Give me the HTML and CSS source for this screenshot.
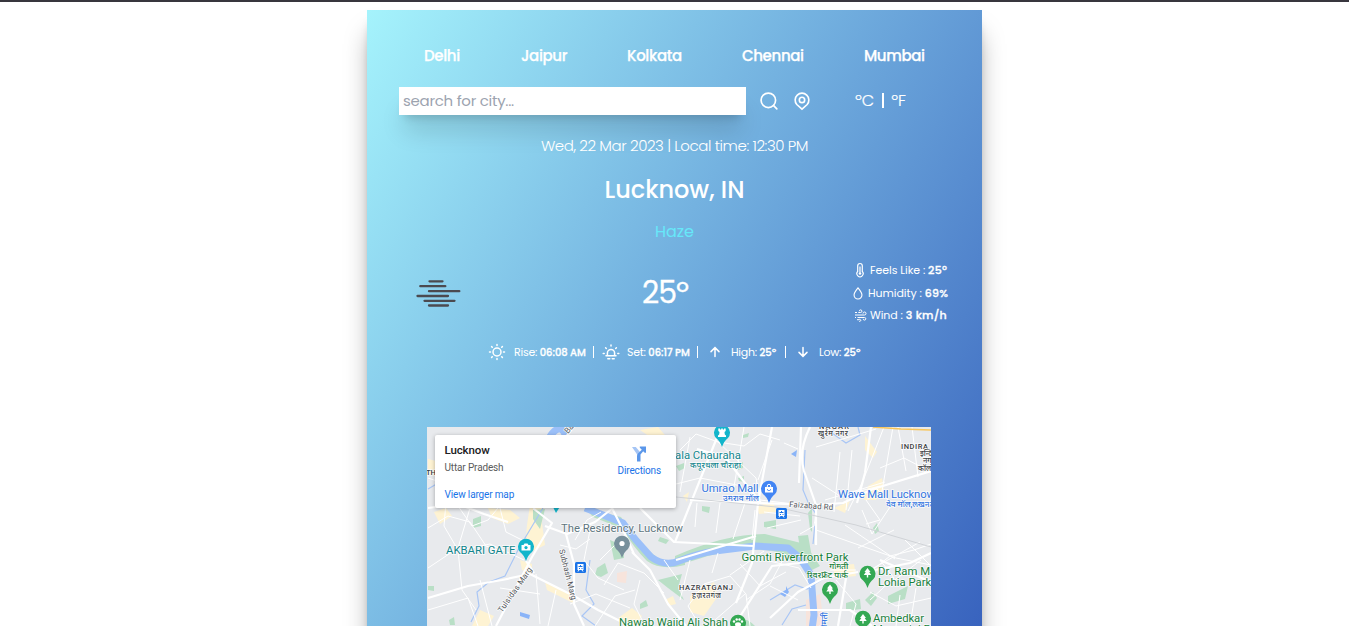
FILE: index.html
```html
<!DOCTYPE html>
<html lang="en">
<head>
<meta charset="utf-8">
<title>Weather</title>
<link rel="stylesheet" href="styles.css">
</head>
<body>
<div class="page">
<main class="card">
  <nav class="cities">
    <a class="c1">Delhi</a><a class="c2">Jaipur</a><a class="c3">Kolkata</a><a class="c4">Chennai</a><a class="c5">Mumbai</a>
  </nav>
  <div class="search">
    <div class="field"><span>search for city...</span></div>
    <svg class="icon find" viewBox="0 0 24 24"><circle cx="11.2" cy="11.2" r="8.7"/><path d="M17.6 17.6 21.4 21.4"/></svg>
    <svg class="icon pin" viewBox="0 0 24 24"><path d="M12 21.8 5.8 16.2A8.2 8.2 0 1 1 18.2 16.2Z"/><circle cx="12" cy="10.7" r="3.2"/></svg>
    <div class="units"><span>ºC</span><i></i><span>ºF</span></div>
  </div>
  <p class="date"><span>Wed, 22 Mar 2023 | Local time: 12:30 PM</span></p>
  <h1 class="place"><span>Lucknow, IN</span></h1>
  <p class="state"><span>Haze</span></p>
  <section class="now">
    <svg class="haze" viewBox="0 0 46 30"><path d="M13.5 2.3H26.500M4.300 7.200H29.300M13 12.200H43.300M1.500 17H32M8.500 21.800H38.500M13 26.500H32"/></svg>
    <div class="temp">25º</div>
    <ul class="details">
      <li class="feels"><svg viewBox="0 0 12 16"><path d="M3.700 9.500V3.800a2.300 2.300 0 0 1 4.600 0v5.700a3.100 3.100 0 1 1-4.600 0ZM6 4.500v6"/><circle class="solid" cx="6" cy="11.500" r="1.300"/></svg><span>Feels Like : <b>25º</b></span></li>
      <li class="humid"><svg viewBox="0 0 12 16"><path d="M6 2C3.500 5 1.800 7.300 1.800 9.700a4.200 4.200 0 0 0 8.400 0C10.200 7.300 8.500 5 6 2Z"/></svg><span>Humidity : <b>69%</b></span></li>
      <li class="wind"><svg viewBox="0 0 13 13"><path d="M1 3.500H3M4.300 3.500H6.600A1.300 1.300 0 1 0 5.300 2.200M1 6H10.500A1.500 1.500 0 1 0 9 4.500M1 8.500H2M3.500 8.500H10.500A1.300 1.300 0 1 1 9.200 9.800M3 10.700H5A1 1 0 1 1 5 12"/></svg><span>Wind : <b>3 km/h</b></span></li>
    </ul>
  </section>
  <section class="sun">
    <svg class="icon rise" viewBox="0 0 18 18"><circle cx="9" cy="9" r="4"/><path d="M9 1.500v1M9 15.500v1M1.500 9h1M15.500 9h1M3.600 3.600l.7.700M13.700 13.700l.7.700M3.600 14.400l.7-.7M13.700 4.300l.7-.7"/></svg>
    <span class="t-rise">Rise: <b>06:08 AM</b></span><i></i>
    <svg class="icon set" viewBox="0 0 18 18"><path d="M1.200 10.500h1M15.800 10.500h1M9 2v1M3.600 4.800l.7.700M14.400 4.800l-.7.700M4 12.800H14M5.400 12.500V10a3.600 3.600 0 0 1 7.200 0V12.500M5.800 15.800H7.800M10.200 15.800H12.200"/></svg>
    <span class="t-set">Set: <b>06:17 PM</b></span><i></i>
    <svg class="icon up" viewBox="0 0 18 18"><path d="M9 13.500V4.800M5 8.600 9 4.600l4 4"/></svg>
    <span class="t-high">High: <b>25º</b></span><i></i>
    <svg class="icon down" viewBox="0 0 18 18"><path d="M9 4.500v8.700M5 9.400 9 13.400l4-4"/></svg>
    <span class="t-low">Low: <b>25º</b></span>
  </section>
  <div class="map">
    <svg class="tiles" viewBox="427 427 504 199">
      <g class="builtup">
        <path d="M428 459l12 3 8 10-6 6-14-4ZM434 512l12-4 6 8-12 8ZM488 508l22 2 10 8-12 6-16-6ZM530 505l14 0-2 18 3 22-12 6-8-6 2-20ZM520 560l12 4 0 10-10-4ZM545 582l22 10 8 12-28-14ZM618 618l14-10 10 8-6 10ZM665 600l8-4 3 8-8 2ZM690 596l24-14 4 14-14 20-14-4ZM757 506l16-4 4 10-18 2ZM832 566l22-2 2 12-20 2ZM865 436l12 16-4 6-8-8ZM868 486l14-8 2 12-8 10-12 0ZM834 508l16-7-5 12ZM683 496l6-4-2 10ZM480 610l14 6-6 10-16 0ZM640 430l18-3 12 14-8 4Z"/>
      </g>
      <path class="hospital" d="M617 573l10-2-1 12-9-1ZM806 600l14-6 4 32-18 0Z"/>
      <g class="park">
        <path d="M585 508l36 9q14 24 38 42 12 6 26 1v5q-24 6-38-4-14-14-24-32l-30-12Z"/>
        <path d="M675 556q50-22 90-22l40 10 15 22-10 5-28-18q-40-10-90 8l-17 4Z"/>
        <path d="M473 519l8-3v10l-8 2ZM533 510l12-1-5 20-7-10ZM610 540l14 6 0 12-10 2ZM597 568l8-5 3 10-7 4-6-2ZM658 580l24-6-4 14 6 12-16-12ZM640 604l6-4 2 6-8 3ZM428 586l6 0v5l-6-1ZM449 620l5-3 1 8-5 0ZM660 537l9 3-3 4-8-3ZM764 522l12-2v9l-12-2ZM803 566l10-3-5-28-10 1ZM702 506l8 1-1 6-7-2ZM738 465l5-3v6l-5 2ZM738 478l6-2v6l-5-1ZM676 466l8-3 1 5-6 3ZM743 435l6-2-1 4-5 1ZM846 603l14-4 1 10-15 2ZM865 600l8-8 4 6-6 8ZM888 596l20-10-3 13-17 5ZM873 528l4-5 2 8-4 3ZM810 529l-2-16 4-5v24ZM735 620q10-4 20 6h-22Z"/>
      </g>
      <path class="canal" d="M428 489l12-7M543 508l-24 40-14 28-16 6-12 10 2 14-8 16M590 560l-4 30 8 14-12 12 14 10M805 450l-2 40 5 12 8 12-3 30M770 600l25-15 12 4 16-10M782 625l10-16 14-4M835 427l-3 6 14 10 14-8-2-8"/>
      <path class="river" d="M549 438q10-16 16-4l-2 14M585 508q26 10 38 15l12 16 16 18q14 10 28 4 20-8 36-10l40-5 33 2 12 10 11 17 3 40-2 14"/>
      <path class="pond" d="M780 594l6-4v-4l3 6-4 5ZM520 612l10 3-1 4-9-3ZM791 454l6-4-1 7Z"/>
      <g class="minor">
        <path d="M428 478l12 4 6 20-2 24 14 24 4 40 14 20M428 528l20-12 22 6 16 24 12 4M458 506l14 20 16-6 10-12M470 508l-12 40-30 20M500 508l6 24 20 10M428 610l40-12 10 28M460 550l30-6 34 16M480 580l12 46M536 574l4 50M500 588l40 6M556 590l-8 36M575 540l12-20 14-8M590 530l-6 30 14 18 26 12M600 560l20-20M604 585l14-22 26 10 20 20M560 545l16 4 14-10M570 604l26-10 34 14M595 626l20-30 20-6M640 580l-6 24 10 20M664 560l14 20M690 560l-10 40M700 626l-12-20 16-22 26-8 16 18 4 32M730 575l34-24M740 564l20 22 26-14M746 600l24-16 16-30M770 586l28 14M718 553l-6 20"/>
        <path d="M680 450l16-16 22 8 26 4 16-12 20 6M690 437l-10 55M716 440l40 38 4 22M744 427l-10 60M772 440l-14 40M784 443l14 6M676 484l24-6 42 8M697 503l-2 24M720 503l-4 30M745 503l-12 36M760 500l42 5M764 512l36 4M767 528l34-8M816 447l40-12 20-6M812 478l28 18 40-10M840 452l-6 60M852 450l-6 60M825 500l60-18M862 510l10 24 20-30-16-16M884 427l-14 36-8 20-14 28M893 427l-12 70M898 427l8 44M912 427l6 50M880 468l24-10 27 14M866 500l14 20-14 4M816 512l-2 14-14 8"/>
        <path d="M816 530l40 14 40 14 35 7M845 525l50 34M860 580l30-24 24-6 17-6M880 560l14 18-24 22M895 580l26-20M905 540l26 26M900 595l-4 31M916 588l-6 38M836 580l20 24-6 22M830 570l26 0M870 592l26 14 35-8M858 548l36-18M870 570l50-28M765 560l34 8 12 20M715 620l30-26M755 510l-3 30"/>
      </g>
      <g class="road">
        <path d="M572 429l-30 40-8 40 18 14-20 34-36 69M428 598l40-12 34-6 28-6 44 22 24 14 32 16M534 573l-8-12M545 526l22 8 28-12 18-14M566 534l8 30 0 40 10 22M632 552l18 18 18 34 18 22M612 508l12 24 10 22M428 508l30-4 26 10 24 8M640 508l34 34 80 4"/>
        <path d="M697 449l28 8 20 26 16 20M690 500l70 3 55 2 28-2 30-14 58-18M720 430l-36 90-9 22M772 427l-14 76-6 60-16 40M810 427q-12 24-6 44l12 34 0 40M871 427l-6 46-8 30M801 427l-2 56M676 560l80-24M860 573l50-10 21-10M734 626l38-60 36-4M770 618l28-26 26-14 34-6M798 610h52l22 16M846 578l-8 48M880 560l51 22"/>
      </g>
      <path class="rail" d="M676 497l100 10 80 18 75 22"/>
      <path class="highway" d="M873 427l28 2 30 1"/>

      <g class="poi">
        <path class="teal" d="M556 513l-4-8h9ZM722 447q-2-6-6-9a8 8 0 1 1 12 0q-4 3-6 9ZM526 561q-2-6-6-9a8 8 0 1 1 12 0q-4 3-6 9Z"/>
        <path class="blue" d="M769 503q-2-6-6-9a8 8 0 1 1 12 0q-4 3-6 9Z"/>
        <path class="gray" d="M622 558q-2-6-6-9a8 8 0 1 1 12 0q-4 3-6 9Z"/>
        <path class="green" d="M867.500 588q-2-6-6-9a8 8 0 1 1 12 0q-4 3-6 9ZM830 604q-2-6-6-9a8 8 0 1 1 12 0q-4 3-6 9ZM863 633q-2-6-6-9a8 8 0 1 1 12 0q-4 3-6 9ZM738 637q-2-6-6-9a8 8 0 1 1 12 0q-4 3-6 9Z"/>
        <g class="glyph">
          <path d="M718 437v-1.500l1.200-1 .3-2.500-1.200-1v-2.500h1.700v1h1.200v-1h1.600v1h1.200v-1h1.700v2.500l-1.200 1 .3 2.500 1.200 1v1.500Z"/>
          <path d="M521.500 545h2l1-1.500h3l1 1.500h2v5.500h-9Z"/><circle class="teal" cx="526" cy="547.600" r="1.600"/>
          <path d="M765 487h8v5.500h-8Z"/><circle cx="622" cy="543.500" r="2.600"/>
          <path d="M867.500 568l3 4h-1.300l2 3h-3v2.500h-1.400V575h-3l2-3h-1.300ZM830 584.500l3 4h-1.300l2 3h-3v2.500h-1.400v-2.500h-3l2-3h-1.300ZM863 614l3 4h-1.300l2 3h-3v2.500h-1.400V621h-3l2-3h-1.300Z"/>
          <ellipse cx="738" cy="624.500" rx="3" ry="2.300"/><circle cx="734" cy="621.500" r="1.200"/><circle cx="736.700" cy="619.500" r="1.200"/><circle cx="739.500" cy="619.500" r="1.200"/><circle cx="742" cy="621.500" r="1.200"/>
        </g>
        <path class="bag" d="M767.300 487v-1a1.700 1.700 0 0 1 3.400 0v1"/>
        <path class="smile" d="M767.300 489a1.700 1.700 0 0 0 3.400 0"/>
        <g class="station"><rect x="575" y="562" width="11" height="11" rx="1.500"/><rect x="776" y="508" width="11" height="11" rx="1.500"/></g>
        <path class="glyph" d="M577.500 564h6v6h-6ZM778.500 510h6v6h-6Z"/>
        <path class="train" d="M578.500 566.500h4M580.500 565v2M779.500 512.500h4M781.500 511v2M579 568.500h1M581.500 568.500h1M780 514.500h1M782.500 514.500h1"/>
        <path class="legs" d="M578 571.500l1-1.500M583 571.500l-1-1.500M779 517.500l1-1.500M784 517.500l-1-1.500"/>
      </g>
      <g class="label">
        <text class="l-teal" x="675" y="459" textLength="66">ala Chauraha</text>
        <text class="l-teal sm" x="690" y="467.500" textLength="51">कपूरथला चौराहा</text>
        <text class="l-teal" x="446" y="554" textLength="69.500" lengthAdjust="spacingAndGlyphs">AKBARI GATE</text>
        <text class="l-blue" x="701.500" y="492" textLength="57">Umrao Mall</text>
        <text class="l-blue sm" x="723" y="500.500" textLength="36">उमराव मॉल</text>
        <text class="l-blue" x="838" y="497.500" textLength="97">Wave Mall Lucknow</text>
        <text class="l-blue sm" x="886" y="506.500" textLength="50">वेव मॉल,लखनऊ</text>
        <text class="l-gray" x="561" y="532" textLength="122">The Residency, Lucknow</text>
        <text class="l-green" x="741.500" y="561" textLength="107">Gomti Riverfront Park</text>
        <text class="l-green sm" x="829" y="569" textLength="19">गोमती</text>
        <text class="l-green sm" x="807" y="578" textLength="41">रिवरफ्रंट पार्क</text>
        <text class="l-green" x="878" y="575">Dr. Ram Manohar</text>
        <text class="l-green" x="878" y="586">Lohia Park</text>
        <text class="l-green" x="873" y="622" textLength="51">Ambedkar</text>
        <text class="l-green" x="873" y="633">Memorial Park</text>
        <text class="l-green" x="619" y="626" textLength="109">Nawab Wajid Ali Shah</text>
        <text class="l-dark" x="679" y="590" textLength="54">HAZRATGANJ</text>
        <text class="l-dark dv" x="692" y="597.500" textLength="29">हज़रतगंज</text>
        <text class="l-dark" x="901" y="449" textLength="27">INDIRA</text>
        <text class="l-dark dv" x="920" y="456">इन्दिरा</text>
        <text class="l-dark dv" x="923" y="463">नगर</text>
        <text class="l-dark dv" x="918" y="470.500">कॉलोनी</text>
        <text class="l-dark" x="819" y="429" textLength="30">NAGAR</text>
        <text class="l-dark dv" x="818" y="436" textLength="30">खुर्रम नगर</text>
        <text class="l-dark" x="426" y="475">TH</text>
        <text class="l-road" x="789" y="507" textLength="44" transform="rotate(4 789 507)">Faizabad Rd</text>
        <text class="l-road" x="502" y="613" textLength="53" transform="rotate(-55 502 613)">Tulsidas Marg</text>
        <text class="l-road" x="559" y="550" textLength="52" transform="rotate(76 559 550)">Subhash Marg</text>
        <text class="l-road" x="568" y="434" transform="rotate(-50 568 434)">Bans</text>
        <text class="l-blue sm" x="821" y="626" transform="rotate(-88 827 626)">गोमती</text>
      </g>
    </svg>
    <aside class="info">
      <div class="info-text">
        <strong>Lucknow</strong>
        <span class="region">Uttar Pradesh</span>
        <a>View larger map</a>
      </div>
      <div class="directions">
        <svg viewBox="0 0 16 16"><path class="light" d="M1 1.500h3.800l4.200 5-1.500 4.500Z"/><path class="dark" d="M6 16V10.500Q6 9 7 8L10.800 4.300 8.800 2.300V1H15V7.200H13.700L12.200 5.700 9.500 9V16Z"/></svg>
        <a>Directions</a>
      </div>
    </aside>
  </div>
</main>
</div>
</body>
</html>
```
FILE: styles.css
```css
* { box-sizing: border-box; }
body { margin: 0; background: #fff; font-family: "Poppins", "Inter", "Open Sans", sans-serif; color: #fff; }
.page { height: 626px; overflow: hidden; border-top: 2px solid #38363e; padding-top: 8px; }
.card {
  width: 615px; height: 1010px; margin: 0 auto; padding: 34px 32px 0;
  background: linear-gradient(to bottom right, #a5f3fc, #1e40af);
  box-shadow: 0 20px 25px -5px rgba(0,0,0,.4), 0 8px 10px -6px rgba(0,0,0,.4);
}
p, h1, ul { margin: 0; padding: 0; }
span, a, b { white-space: nowrap; }
.icon { fill: none; stroke: #fff; stroke-width: 2; stroke-linecap: round; flex: none; }
.cities { display: flex; gap: 60px; padding-left: 25px; height: 24px; align-items: center; font-size: 15px; line-height: 24px; font-weight: 500; -webkit-text-stroke: .25px #fff; }
.cities a { letter-spacing: -.36px; }
.c1 { width: 37px; }
.c2 { width: 46px; }
.c3 { width: 55px; }
.c4 { width: 62px; }
.search { display: flex; align-items: center; margin-top: 19px; height: 28px; }
.field { width: 347px; height: 28px; padding: 0 4px; background: #fff; color: #9ca3af; font-size: 15px; letter-spacing: -.27px; line-height: 28px; box-shadow: 0 20px 25px -5px rgba(0,0,0,.16), 0 8px 10px -6px rgba(0,0,0,.2); }
.find { width: 20px; height: 20px; margin-left: 13px; }
.pin { width: 20px; height: 20px; margin-left: 13px; }
.units { display: flex; align-items: center; margin: -2px 0 0 43px; font-size: 16px; font-weight: 300; -webkit-text-stroke: .2px #fff; }
.units i { width: 2px; height: 15px; margin: 0 7px 0 8px; background: #fff; }
.date { margin-top: 19px; height: 24px; line-height: 24px; text-align: center; font-size: 15px; font-weight: 300; letter-spacing: -.42px; }
.place { margin-top: 16px; height: 32px; line-height: 32px; text-align: center; font-size: 24px; font-weight: 500; }
.state { margin-top: 14px; height: 24px; line-height: 24px; text-align: center; font-size: 16px; color: #67e8f9; }
.now { display: flex; align-items: center; margin-top: 15px; height: 68px; }
.haze { width: 46px; height: 30px; margin: 1px 0 0 17px; stroke: #4b4a50; stroke-width: 2.300; stroke-linecap: round; }
.temp { width: 50px; margin-left: 180px; font-size: 30px; line-height: 36px; letter-spacing: -1px; -webkit-text-stroke: .3px #fff; }
.details { display: flex; flex-direction: column; align-items: flex-start; list-style: none; margin-left: 160px; font-size: 11px; font-weight: 400; letter-spacing: -.05px; }
.details li { display: flex; align-items: center; height: 22.600px; }
.details b { font-weight: 500; -webkit-text-stroke: .3px #fff; letter-spacing: .25px; }
.details svg { fill: none; stroke: #fff; stroke-width: 1.200; }
.details .solid { fill: #fff; stroke: none; }
.feels svg { width: 12px; height: 16px; margin-right: 4px; }
.humid svg { width: 12px; height: 15px; margin-right: 4px; }
.wind svg { width: 13px; height: 13px; margin-right: 3px; stroke-width: 1; }
.feels, .wind { margin-left: 2px; }
.sun { display: flex; align-items: center; margin-top: 15px; height: 20px; padding-left: 89px; font-size: 11px; font-weight: 400; }
.sun b { font-weight: 500; font-size: 10px; -webkit-text-stroke: .3px #fff; letter-spacing: -.05px; }
.sun .icon { width: 18px; height: 18px; stroke-width: 1.500; }
.sun i { width: 1px; height: 12px; background: #fff; flex: none; }
.sun span { letter-spacing: -.25px; flex: none; }
.t-rise { width: 79px; margin-left: 8px; }
.t-set { width: 70px; margin-left: 7px; }
.t-high { width: 54px; margin-left: 7px; }
.t-low { margin-left: 7px; }
.set { margin-left: 8px; }
.up, .down { margin-left: 8px; }
.map { position: relative; width: 504px; height: 199px; margin: 65px 0 0 28px; overflow: hidden; background: #e8eaed; }
.tiles { display: block; width: 504px; height: 199px; background: #e8eaed; }
.builtup { fill: #fef3d3; }
.hospital { fill: #f7e4dc; }
.park { fill: #b9dfc6; }
.river { fill: none; stroke: #9cc0f9; stroke-width: 7; stroke-linejoin: round; }
.pond { fill: #8ab4f8; }
.canal { fill: none; stroke: #a9c6f5; stroke-width: 1.200; }
.minor { fill: none; stroke: #fff; stroke-width: 1; }
.road { fill: none; stroke: #fff; stroke-width: 2.200; stroke-linejoin: round; }
.rail { fill: none; stroke: #d0d3d7; stroke-width: 1; }
.highway { fill: none; stroke: #f9c65a; stroke-width: 1.500; }
.teal { fill: #12b5cb; }
.blue { fill: #4285f4; }
.gray { fill: #78909c; }
.green { fill: #34a853; }
.glyph { fill: #fff; }
.bag, .legs { fill: none; stroke: #fff; stroke-width: 1; }
.smile { fill: none; stroke: #4285f4; stroke-width: .8; }
.station { fill: #1a73e8; }
.train { stroke: #1a73e8; stroke-width: 1; }
.label { font-family: Roboto, "Noto Sans", sans-serif; font-size: 11.300px; stroke: #fff; stroke-width: 1.500px; stroke-opacity: .8; }
.label text { paint-order: stroke; }
.label .sm { font-size: 8.500px; font-weight: 500; }
.l-teal { fill: #12858d; }
.l-blue { fill: #3174e0; }
.l-gray { fill: #5f7680; }
.l-green { fill: #18803c; }
.l-dark { fill: #3c4043; font-size: 7.500px; font-weight: 500; }
.l-road { fill: #55585c; font-size: 8px; }
.info { position: absolute; left: 8px; top: 8px; width: 241px; height: 73px; display: flex; justify-content: space-between; padding: 8px 15px 0 9.500px; background: #fff; border-radius: 2px; box-shadow: 0 1px 4px rgba(0,0,0,.3); font-family: Roboto, sans-serif; font-size: 10px; letter-spacing: -.15px; }
.info-text { display: flex; flex-direction: column; }
.info strong { font-size: 11.500px; line-height: 15px; font-weight: 500; color: #202124; letter-spacing: -.1px; }
.region { color: #5b5b5b; line-height: 12px; margin-top: 4px; }
.info a { color: #1a73e8; line-height: 12px; }
.info-text a { margin-top: 15px; }
.directions { display: flex; flex-direction: column; align-items: center; padding-top: 2px; }
.directions svg { width: 16px; height: 17px; margin-bottom: 3px; }
.light { fill: #a5c5f5; }
.dark { fill: #5b97ea; }
```
